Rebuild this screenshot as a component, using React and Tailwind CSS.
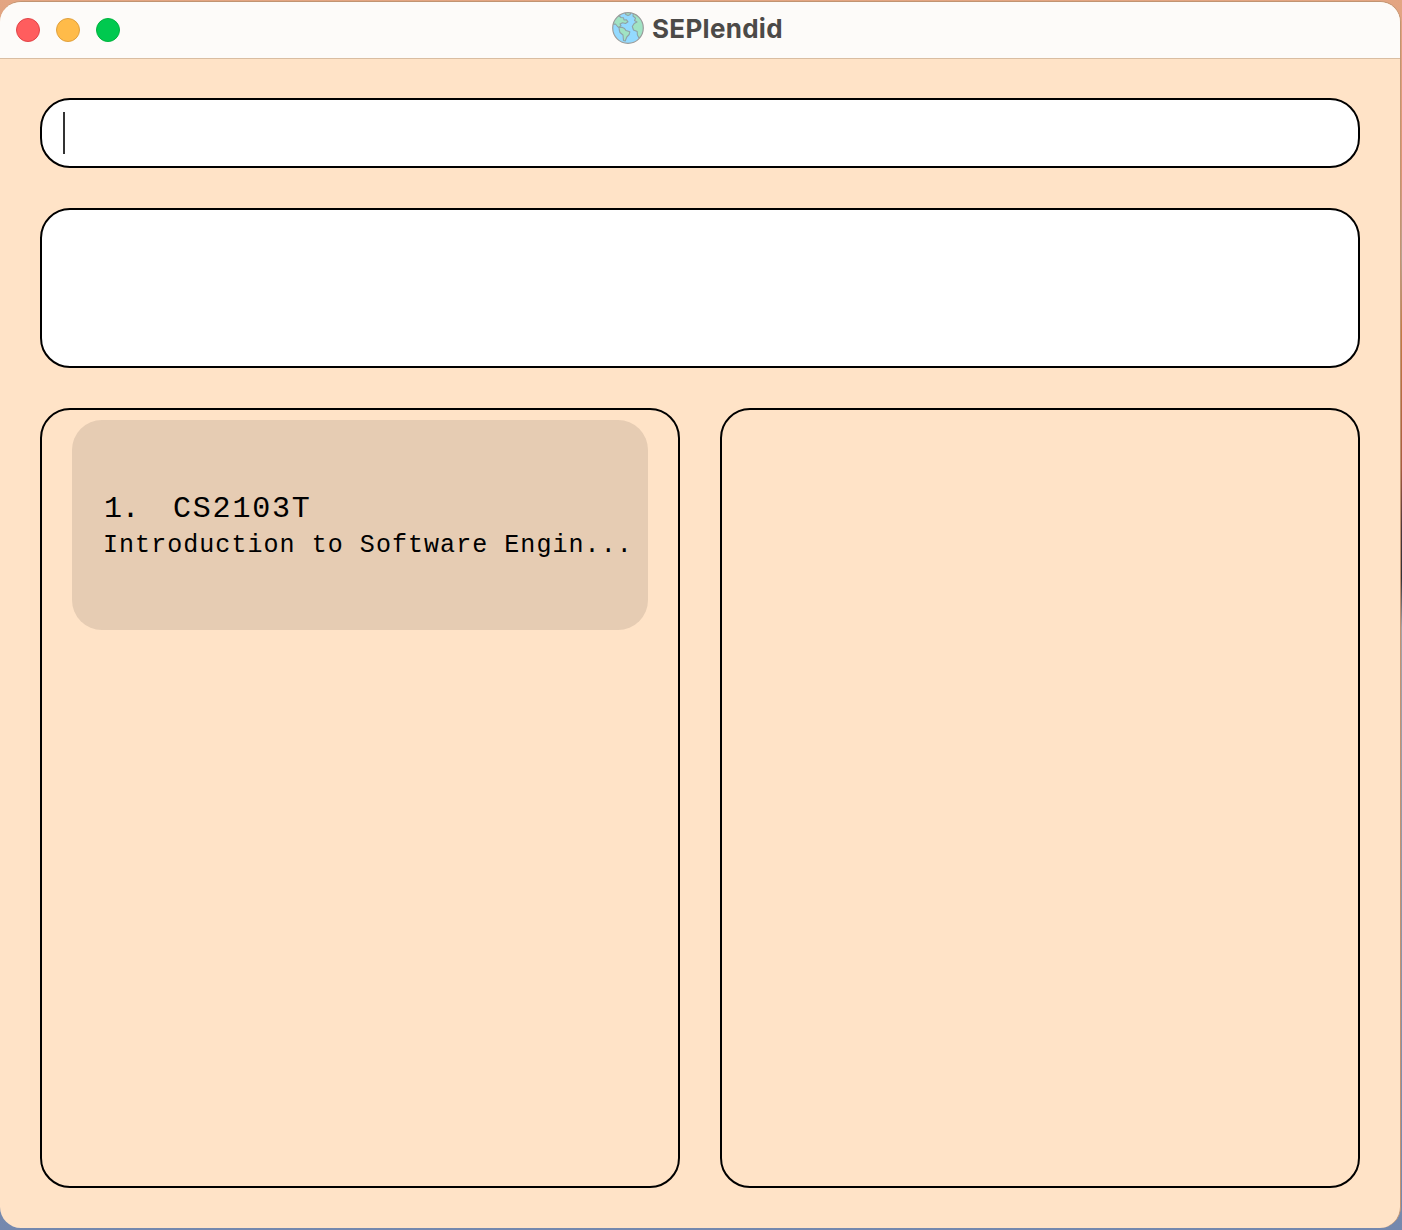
function Globe() {
  return (
    <svg className="size-8" viewBox="0 0 32 32">
      <defs>
        <clipPath id="globe">
          <circle cx="16" cy="16" r="15.2" />
        </clipPath>
      </defs>
      <circle cx="16" cy="16" r="15.2" fill="#93daff" />
      <g clipPath="url(#globe)" fill="#a0e3c3" stroke="#8fa3a5" strokeWidth="1.1" strokeLinejoin="round">
        <path d="M-1 12.500 L3.500 12 L5.500 14.500 L7 15.500 L9 13.500 L8 12 L10.500 10.800 L13.500 11.500 L16 9.800 L14.500 7.800 L12 8 L11.500 5.800 L9 5.500 L6 3 L-1 0 Z" />
        <path d="M7 15.500 L10 15.200 L12.500 16.500 L14 18.600 L17.800 19.800 L17.200 22.500 L14.800 25 L13.200 29 L11.500 28.500 L11 23 L8 20.500 L7.300 18 Z" />
        <path d="M12.800 -1 L19 -1 L18.200 2.500 L16 3.600 L13.800 2.500 Z" />
        <path d="M21.500 0 L21 4 L23.500 6.200 L22.500 8.500 L25 10 L22.200 11.500 L20.300 14.500 L21.500 18 L25.200 19.500 L25.400 23 L27 26 L33 22 L33 4 Z" />
      </g>
      <circle cx="16" cy="16" r="15.3" fill="none" stroke="#9a9c9b" strokeWidth="1.2" />
    </svg>
  );
}

function TitleBar() {
  return (
    <header className="relative flex h-[57px] shrink-0 items-center justify-center border-b border-[#d9bda2] bg-[#fdfbf9]">
      <div className="absolute left-4 top-4 flex gap-4">
        <span className="size-6 rounded-full border border-[#e04448] bg-[#ff5d5e]" />
        <span className="size-6 rounded-full border border-[#dfa03e] bg-[#ffbb49]" />
        <span className="size-6 rounded-full border border-[#00b33e] bg-[#00c94f]" />
      </div>
      <div className="mr-[5px] flex -translate-y-[2px] items-center gap-2">
        <Globe />
        <h1 className="h-8 w-[131px] whitespace-nowrap font-['Inter',sans-serif] text-[26px] font-bold leading-[34px] tracking-[0.3px] text-[#4c4a48]">
          SEPlendid
        </h1>
      </div>
    </header>
  );
}

function ModuleCard({ index, code, title }) {
  return (
    <li className="flex h-[210px] flex-col rounded-[30px] bg-[#e6ccb3] pl-[31px] pt-[71px] font-['Liberation_Mono',monospace] text-black">
      <div className="flex h-9 items-center whitespace-nowrap pl-px text-[30px] leading-9 tracking-[1.8px]">
        <span className="w-[69px] tracking-[-0.5px]">{index}.</span>
        <span>{code}</span>
      </div>
      <p className="mt-0.5 whitespace-nowrap text-[25px] leading-[34px] tracking-[1.05px]">{title}</p>
    </li>
  );
}

export default function App() {
  return (
    <div className="h-[1230px] w-[1402px] bg-[linear-gradient(to_bottom,#e3a582_0%,#dc9673_14%,#b9a28f_21%,#c47a43_27%,#a75c3e_38%,#4a363a_43%,#303036_47%,#a5a3a8_51%,#9097a7_75%,#7488ae_100%)] pt-px">
      <div className="flex h-[1227px] w-[1401px] flex-col overflow-hidden rounded-[21px] border-r border-t border-[#c19472] bg-[#ffe3c7]">
        <TitleBar />
        <main className="flex flex-1 flex-col gap-10 px-10 pt-[39px]">
          <div className="flex h-[70px] w-[1320px] shrink-0 items-center rounded-[30px] border-2 border-black bg-white pl-[21px]">
            <span className="h-[42px] w-[2px] bg-[#333333]" />
          </div>
          <div className="h-40 w-[1320px] shrink-0 rounded-[30px] border-2 border-black bg-white" />
          <div className="grid h-[780px] w-[1320px] shrink-0 grid-cols-2 gap-10">
            <ul className="rounded-[30px] border-2 border-black px-[30px] pt-[10px]">
              <ModuleCard index={1} code="CS2103T" title="Introduction to Software Engin..." />
            </ul>
            <section className="rounded-[30px] border-2 border-black" />
          </div>
        </main>
      </div>
    </div>
  );
}
